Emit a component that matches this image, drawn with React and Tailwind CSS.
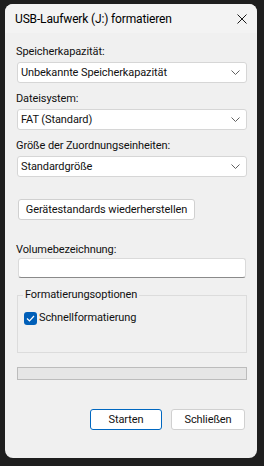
import React from "react";

const font = { fontFamily: 'Roboto, "Liberation Sans", sans-serif' };

function Chevron() {
  return (
    <svg width="9" height="5" viewBox="0 0 9 5" className="shrink-0">
      <path d="M0.5 0.5 L4.5 4.5 L8.5 0.5" fill="none" stroke="#606060" strokeWidth="1" />
    </svg>
  );
}

function Combo({ value }) {
  return (
    <div className="mt-[2px] ml-[1px] flex h-[21px] items-center justify-between rounded-[3px] border border-[#d6d6d6] bg-white pl-[3px] pr-[6px]">
      <span className="leading-none">{value}</span>
      <Chevron />
    </div>
  );
}

function Field({ label, value, first }) {
  return (
    <div className={first ? "" : "mt-[8px]"}>
      <div className="h-[16px] leading-[16px]">{label}</div>
      <Combo value={value} />
    </div>
  );
}

export default function App() {
  return (
    <div className="h-[466px] w-[264px] bg-[#1e1e1e] pl-[5px] pt-[4px]" style={font}>
      <div className="flex h-[454px] w-[252px] flex-col overflow-hidden rounded-[8px] bg-[#f0f0f0] text-[11px] tracking-[-0.1px] text-[#111]">
        {/* Titelleiste */}
        <div className="flex h-[29px] shrink-0 items-center justify-between bg-[#f3f3f3] pl-[10px] pr-[10px]">
          <span className="text-[12px] tracking-[-0.15px] text-black">USB-Laufwerk (J:) formatieren</span>
          <svg width="10" height="10" viewBox="0 0 10 10">
            <path d="M0.5 0.5 L9.5 9.5 M9.5 0.5 L0.5 9.5" stroke="#1a1a1a" strokeWidth="1" />
          </svg>
        </div>

        <div className="flex flex-col pl-[11px] pr-[10px] pt-[11px]">
          <Field first label="Speicherkapazität:" value="Unbekannte Speicherkapazität" />
          <Field label="Dateisystem:" value="FAT (Standard)" />
          <Field label="Größe der Zuordnungseinheiten:" value="Standardgröße" />

          <button className="mt-[22px] ml-[2px] flex h-[21px] w-[177px] items-center justify-center whitespace-nowrap rounded-[3px] border border-[#d0d0d0] bg-white leading-none">
            Gerätestandards wiederherstellen
          </button>

          <div className="mt-[22px] h-[16px] leading-[16px]">Volumebezeichnung:</div>
          <div className="ml-[2px] mr-[1px] h-[20px] rounded-[3px] border border-[#dadada] border-b-[#8a8a8a] bg-white" />

          <fieldset className="mt-[9px] ml-[1px] h-[66px] border border-[#dcdcdc] px-[6px]">
            <legend className="-ml-[1px] px-[2px] leading-[16px]">Formatierungsoptionen</legend>
            <div className="mt-[7px] flex items-center gap-[2px]">
              <span className="flex h-[13px] w-[13px] items-center justify-center rounded-[3px] bg-[#005fb8]">
                <svg width="9" height="7" viewBox="0 0 9 7">
                  <path d="M1 3.5 L3.5 6 L8 1" fill="none" stroke="white" strokeWidth="1.2" />
                </svg>
              </span>
              <span className="leading-[16px]">Schnellformatierung</span>
            </div>
          </fieldset>

          <div className="mt-[14px] ml-[1px] h-[13px] border border-[#bcbcbc] bg-[#e6e6e6]" />

          <div className="mt-[29px] flex justify-end gap-[9px] pr-[2px]">
            <button className="flex h-[21px] w-[72px] items-center justify-center rounded-[3px] border border-[#0067c0] bg-white leading-none">
              Starten
            </button>
            <button className="flex h-[21px] w-[74px] items-center justify-center rounded-[3px] border border-[#d0d0d0] bg-white leading-none">
              Schließen
            </button>
          </div>
        </div>
      </div>
    </div>
  );
}
